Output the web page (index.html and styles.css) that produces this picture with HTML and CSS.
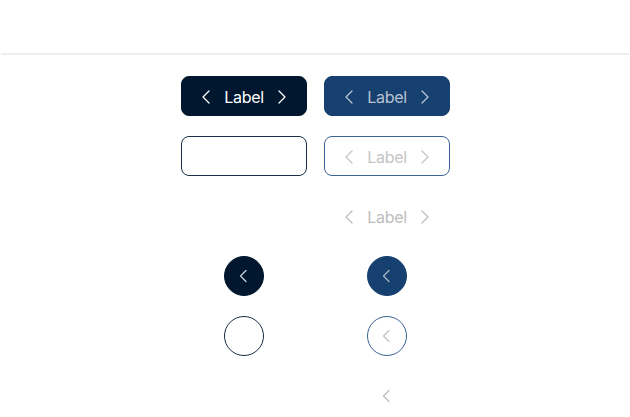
FILE: index.html
```html
<!DOCTYPE html>
<html>
<head>
<meta charset="utf-8">
<link rel="stylesheet" href="styles.css">
</head>
<body>
<header class="top">
  <h1 class="title">Dark page</h1>
</header>
<div class="rule"></div>
<main class="grid">
  <div class="cell"><button class="btn solid dark"><svg class="ic" viewBox="0 0 16 16"><polyline points="10,2 4,8 10,14"/></svg><span>Label</span><svg class="ic" viewBox="0 0 16 16"><polyline points="6,2 12,8 6,14"/></svg></button></div>
  <div class="cell"><button class="btn solid blue"><svg class="ic" viewBox="0 0 16 16"><polyline points="10,2 4,8 10,14"/></svg><span>Label</span><svg class="ic" viewBox="0 0 16 16"><polyline points="6,2 12,8 6,14"/></svg></button></div>

  <div class="cell"><button class="btn outline dark"><svg class="ic" viewBox="0 0 16 16"><polyline points="10,2 4,8 10,14"/></svg><span>Label</span><svg class="ic" viewBox="0 0 16 16"><polyline points="6,2 12,8 6,14"/></svg></button></div>
  <div class="cell"><button class="btn outline blue"><svg class="ic" viewBox="0 0 16 16"><polyline points="10,2 4,8 10,14"/></svg><span>Label</span><svg class="ic" viewBox="0 0 16 16"><polyline points="6,2 12,8 6,14"/></svg></button></div>

  <div class="cell"><button class="btn ghost dark"><svg class="ic" viewBox="0 0 16 16"><polyline points="10,2 4,8 10,14"/></svg><span>Label</span><svg class="ic" viewBox="0 0 16 16"><polyline points="6,2 12,8 6,14"/></svg></button></div>
  <div class="cell"><button class="btn ghost blue"><svg class="ic" viewBox="0 0 16 16"><polyline points="10,2 4,8 10,14"/></svg><span>Label</span><svg class="ic" viewBox="0 0 16 16"><polyline points="6,2 12,8 6,14"/></svg></button></div>

  <div class="cell"><button class="round solid dark"><svg class="ic" viewBox="0 0 16 16"><polyline points="10,2.5 4.5,8 10,13.5"/></svg></button></div>
  <div class="cell"><button class="round solid blue"><svg class="ic" viewBox="0 0 16 16"><polyline points="10,2.5 4.5,8 10,13.5"/></svg></button></div>

  <div class="cell"><button class="round outline dark"><svg class="ic" viewBox="0 0 16 16"><polyline points="10,2.5 4.5,8 10,13.5"/></svg></button></div>
  <div class="cell"><button class="round outline blue"><svg class="ic" viewBox="0 0 16 16"><polyline points="10,2.5 4.5,8 10,13.5"/></svg></button></div>

  <div class="cell"><button class="round ghost dark"><svg class="ic" viewBox="0 0 16 16"><polyline points="10,2.5 4.5,8 10,13.5"/></svg></button></div>
  <div class="cell"><button class="round ghost blue"><svg class="ic" viewBox="0 0 16 16"><polyline points="10,2.5 4.5,8 10,13.5"/></svg></button></div>
</main>
</body>
</html>
```

FILE: styles.css
```css
* { box-sizing: border-box; }
html, body { margin: 0; padding: 0; background: #ffffff; }
body { font-family: Inter, "Noto Sans", "Liberation Sans", sans-serif; }

.top { height: 53px; padding: 2px 0 0 5px; }
.title {
  margin: 0;
  font-size: 18px;
  font-weight: 500;
  color: #ffffff;
  line-height: 22px;
}
.rule { height: 2px; margin: 0 1px; background: #eeeeee; }

.grid {
  display: grid;
  grid-template-columns: 143px 143px;
  grid-auto-rows: 40px;
  row-gap: 20px;
  justify-content: center;
  padding-top: 21px;
  margin-left: 1px;
}
.cell { display: flex; justify-content: center; align-items: center; }

.btn {
  height: 40px;
  display: flex;
  align-items: center;
  gap: 9px;
  padding: 1px 17px 0;
  border-radius: 8px;
  border: 1px solid transparent;
  background: transparent;
  font-family: inherit;
  font-size: 16px;
  letter-spacing: -0.3px;
  font-weight: 400;
  line-height: 1;
  margin: 0;
}
.round {
  width: 40px;
  height: 40px;
  border-radius: 50%;
  border: 1px solid transparent;
  background: transparent;
  padding: 0;
  margin: 0;
  display: flex;
  align-items: center;
  justify-content: center;
}
.ic { width: 16px; height: 16px; fill: none; stroke: currentColor; stroke-width: 1.3; stroke-linecap: round; stroke-linejoin: round; }

.solid.dark { background: #01162f; border-color: #01162f; color: #ffffff; }
.solid.blue { background: #164070; border-color: #164070; color: #b9c4d2; }
.round.solid.dark { color: #c8ced8; }
.round.solid.blue { color: #a9b6c6; }

.outline.dark { border-color: #1a2c46; color: #ffffff; }
.outline.blue { border-color: #3a6294; color: #c4c4c4; }

.ghost.dark { color: #ffffff; }
.ghost.blue { color: #bdbdbd; }
```
